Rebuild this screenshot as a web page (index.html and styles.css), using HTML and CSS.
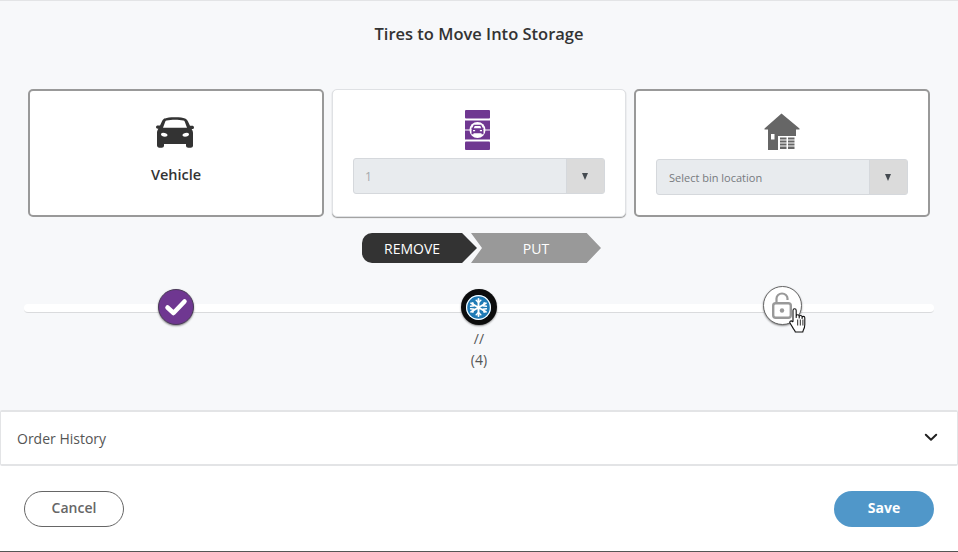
FILE: index.html
```html
<!DOCTYPE html>
<html lang="en">
<head>
<meta charset="utf-8">
<title>Tires to Move Into Storage</title>
<link rel="stylesheet" href="styles.css">
</head>
<body>
<div class="page">
  <section class="main">
    <h1 class="title">Tires to Move Into Storage</h1>
    <div class="cards">
      <div class="card card-active">
        <svg class="icon-car" width="40" height="32" viewBox="0 0 40 32"><path fill="#333" fill-rule="evenodd" d="M10 1.5C12 .7 15 .2 20 .2s8 .5 10 1.300c1.500.6 2.300 1.600 3 3l2 4.300h2.200c1 0 1.800.7 1.800 1.600 0 1-.8 1.700-1.800 1.700h-.6c.9 1.200 1.400 2.500 1.400 4v12.400c0 1.300-1 2.300-2.300 2.300h-2.400c-1.300 0-2.300-1-2.300-2.300v-1.500H9v1.500c0 1.300-1 2.300-2.300 2.300H4.300C3 30.500 2 29.500 2 28.200V15.800c0-1.500.5-2.800 1.400-4h-.6C1.800 11.800 1 11.100 1 10.100c0-.9.800-1.600 1.800-1.600H5l2-4.300c.7-1.400 1.500-2.400 3-3zM10.300 4.500 8 10.800h24l-2.300-6.300c-.3-.6-.7-.9-1.300-1C26 3 23 2.800 20 2.800s-6 .2-8.400.7c-.6.100-1 .4-1.300 1zM6 17.500c0 1 1.600 2.300 4 2.300 1.500 0 2.500-.7 2.500-1.700 0-1.200-2-2.300-4.500-2.300-1.200 0-2 .7-2 1.700zm28 0c0-1-.8-1.700-2-1.700-2.500 0-4.500 1.100-4.500 2.300 0 1 1 1.700 2.500 1.700 2.400 0 4-1.300 4-2.300z"/></svg>
        <div class="card-label">Vehicle</div>
      </div>
      <div class="card card-middle">
        <svg class="icon-tire" width="25" height="40" viewBox="0 0 25 40">
          <rect width="25" height="8.500" rx="1" fill="#6f3791"/>
          <rect y="10.500" width="25" height="9" fill="#6f3791"/>
          <rect y="20.500" width="25" height="9" fill="#6f3791"/>
          <rect y="31.500" width="25" height="8.500" rx="1" fill="#6f3791"/>
          <circle cx="12.500" cy="20" r="8" fill="#fff"/>
          <path fill="#6f3791" fill-rule="evenodd" d="M8.800 14.800h7.400l1.500 2.900h1v1.100h-.7c.4.500.5 1 .5 1.500v3.900h-2v-1H8.500v1h-2v-3.900c0-.5.100-1 .5-1.500h-.7v-1.100h1zM9.700 16.100l-.9 2.200h7.400l-.9-2.200zM8 20.100v1.100h2.100v-1.100zm6.900 0v1.100H17v-1.100z"/>
        </svg>
        <div class="select select-disabled">
          <span class="select-value">1</span>
          <span class="select-arrow"><i class="caret"></i></span>
        </div>
      </div>
      <div class="card card-active">
        <svg class="icon-house" width="36" height="37" viewBox="0 0 36 37">
          <path fill="#666" d="M17.500.500 35.500 15.500v1H32v20.500H4V16.500H.500v-1z"/>
          <rect x="7" y="21" width="3.500" height="5.500" fill="#fff"/>
          <rect x="14" y="23" width="18" height="14" fill="#fff"/>
          <path fill="#666" d="M16 24.500h6.500v2H16zm0 3h6.500v2H16zm0 3h6.500v2H16zm0 3h6.500v2.500H16zM24 24.500h6.500v2H24zm0 3h6.500v2H24zm0 3h6.500v2H24zm0 3h6.500v2.500H24z"/>
        </svg>
        <div class="select">
          <span class="select-value select-placeholder">Select bin location</span>
          <span class="select-arrow"><i class="caret"></i></span>
        </div>
      </div>
    </div>
    <div class="toggle">
      <span class="chip chip-remove">REMOVE</span>
      <span class="chip chip-put">PUT</span>
    </div>
    <div class="steps">
      <div class="step">
        <span class="dot dot-done">
          <svg width="24" height="20" viewBox="0 0 24 20"><path d="M3.500 10.500 9.500 16 20.500 4.500" fill="none" stroke="#fff" stroke-width="4.500" stroke-linecap="round" stroke-linejoin="round"/></svg>
        </span>
      </div>
      <div class="step">
        <span class="dot dot-tire">
          <span class="tire-inner">
            <svg width="19" height="19" viewBox="0 0 18 18" fill="none" stroke="#fff" stroke-width="1.800" stroke-linecap="round">
              <path d="M9 1v16M2 5l14 8M2 13 16 5"/>
              <path stroke-width="1.400" d="M6.800 2.200 9 4.200l2.200-2M6.800 15.800 9 13.800l2.200 2M1.500 7.800l2.900-.4L3.600 4.500M16.500 10.200l-2.900.4.800 2.900M1.500 10.200l2.900.4-.8 2.900M16.500 7.800l-2.900-.4.800-2.900"/>
            </svg>
          </span>
        </span>
        <div class="step-text">//</div>
        <div class="step-text">(4)</div>
      </div>
      <div class="step">
        <span class="dot dot-lock">
          <svg width="20" height="27" viewBox="0 0 20 27" fill="none">
            <path d="M4.500 12V6.500a5.500 5 0 0 1 11 0V8" stroke="#999" stroke-width="2.200"/>
            <rect x="1.200" y="11.200" width="17.600" height="14.600" rx="2.500" stroke="#999" stroke-width="2.400"/>
            <circle cx="10" cy="18.500" r="2.200" fill="#999"/>
          </svg>
        </span>
        <svg class="cursor" width="18" height="25" viewBox="0 0 18 25"><path fill="#fff" stroke="#111" stroke-width="1.100" stroke-linejoin="round" d="M4 13.500V2.600C4 1.500 4.700.8 5.600.8s1.600.7 1.600 1.800V9.500V8.400c0-1 .7-1.600 1.500-1.600s1.500.6 1.500 1.600v1.500-.9c0-1 .7-1.500 1.400-1.500s1.500.5 1.500 1.500v1.500-.7c0-.9.600-1.400 1.300-1.400s1.400.5 1.400 1.400v6.700c0 2.500-.5 4-1.500 5.700-.3.700-.5 1.300-.5 1.800H6.300c0-.9-.8-1.800-1.800-3.100L1.300 15.500c-.7-1-.6-1.800 0-2.300.7-.5 1.500-.3 2.100.5z"/><path stroke="#111" stroke-width=".9" d="M8.700 11.500v6M11.300 11.500v6M13.900 11.500v6"/></svg>
      </div>
    </div>
  </section>
  <section class="history">
    <span class="history-label">Order History</span>
    <svg class="history-chevron" width="14" height="9" viewBox="0 0 14 9"><path d="M1.800 1.800 7 6.800l5.200-5" fill="none" stroke="#222" stroke-width="2" stroke-linecap="round" stroke-linejoin="round"/></svg>
  </section>
  <footer class="footer">
    <button class="btn btn-cancel" type="button">Cancel</button>
    <button class="btn btn-save" type="button">Save</button>
  </footer>
</div>
</body>
</html>
```

FILE: styles.css
```css
* { box-sizing: border-box; }
html, body { margin: 0; padding: 0; }
body {
  width: 958px;
  height: 552px;
  overflow: hidden;
  background: #fff;
  font-family: "Open Sans", "Liberation Sans", sans-serif;
  color: #333;
}
.page {
  height: 552px;
  display: flex;
  flex-direction: column;
  border-bottom: 1px solid #555;
}
.main {
  height: 411px;
  background: #f7f8fa;
  border-top: 1px solid #e3e4e6;
  display: flex;
  flex-direction: column;
}
.title {
  margin: 22px 0 0;
  height: 22px;
  font-size: 16.500px;
  line-height: 22px;
  font-weight: 600;
  text-align: center;
  color: #333;
}
.cards {
  margin: 44px 28px 0;
  display: grid;
  grid-template-columns: 296px 294px 296px;
  gap: 8px;
}
.card {
  height: 128px;
  background: #fff;
  border-radius: 5px;
  display: flex;
  flex-direction: column;
  align-items: center;
}
.card-active {
  border: 2px solid #999;
}
.card-middle {
  border: 1px solid #dfe1e4;
  box-shadow: 0 1px 1px #999;
}
.icon-car { margin-top: 26px; margin-right: 2px; }
.card-label {
  margin-top: 16px;
  font-size: 14.500px;
  line-height: 20px;
  font-weight: 600;
  color: #333;
}
.icon-tire { margin-top: 20px; margin-right: 3px; }
.icon-house { margin-top: 22px; }
.select {
  margin-top: 9px;
  width: 252px;
  height: 36px;
  background: #e8ebee;
  border: 1px solid #d5d8dc;
  border-radius: 3px;
  display: flex;
  align-items: center;
  justify-content: space-between;
  flex: none;
}
.card-middle .select { margin-top: 8px; }
.select-value {
  padding: 1px 0 0 11px;
  font-size: 12px;
  color: #a5a8ac;
}
.select-placeholder { padding: 0 0 0 12px; color: #777a7e; font-size: 11px; }
.select-arrow {
  width: 38px;
  height: 100%;
  padding-right: 2px;
  background: #dbdbdb;
  border-left: 1px solid #d5d8dc;
  display: flex;
  align-items: center;
  justify-content: center;
}
.caret {
  width: 0;
  height: 0;
  border-left: 3.500px solid transparent;
  border-right: 3.500px solid transparent;
  border-top: 7px solid #444a50;
}
.toggle {
  margin-top: 16px;
  margin-left: 362px;
  display: flex;
  height: 30px;
}
.chip {
  height: 30px;
  display: flex;
  align-items: center;
  justify-content: center;
  font-size: 14px;
  color: #fff;
}
.chip-remove {
  width: 115px;
  padding-right: 15px;
  background: #333;
  border-radius: 10px 0 0 10px;
  clip-path: polygon(0 0, 87% 0, 100% 50%, 87% 100%, 0 100%);
  position: relative;
  z-index: 1;
}
.chip-put {
  width: 130px;
  margin-left: -6px;
  background: #999;
  clip-path: polygon(0 0, 89% 0, 100% 50%, 89% 100%, 0 100%, 11px 50%);
}
.steps {
  position: relative;
  margin: 26px 24px 0;
  display: grid;
  grid-template-columns: repeat(3, 1fr);
}
.steps::before {
  content: "";
  position: absolute;
  left: 0;
  right: 0;
  top: 15px;
  height: 8px;
  background: #fff;
  border-bottom: 1px solid #dadbdd;
  border-radius: 4px;
}
.step {
  position: relative;
  display: flex;
  flex-direction: column;
  align-items: center;
}
.dot {
  position: relative;
  width: 36px;
  height: 36px;
  border-radius: 50%;
  display: flex;
  align-items: center;
  justify-content: center;
  box-shadow: 0 1px 2px rgba(0,0,0,.45);
}
.dot-done { background: #6f3791; border: 1px solid #4a3a58; }
.dot-tire { background: #0c0c0c; }
.tire-inner {
  width: 25px;
  height: 25px;
  border-radius: 50%;
  background: #1f7ab5;
  box-shadow: 0 0 0 1.200px #fff inset;
  display: flex;
  align-items: center;
  justify-content: center;
}
.dot-lock {
  background: #fff;
  border: 1px solid #666;
  width: 39px;
  height: 39px;
  margin-top: -3px;
}
.step-text {
  font-size: 14px;
  line-height: 21px;
  color: #555;
  text-align: center;
}
.step-text:first-of-type { margin-top: 3px; }
.cursor {
  position: absolute;
  left: 50%;
  top: 19px;
  margin-left: 7px;
}
.history {
  height: 56px;
  margin-top: -1px;
  background: #fff;
  border: 1px solid #e3e4e6;
  border-top-width: 2px;
  border-bottom-width: 2px;
  border-radius: 2px;
  padding: 0 19px 0 16px;
  display: flex;
  align-items: center;
  justify-content: space-between;
}
.history-label {
  font-size: 14px;
  color: #555;
}
.history-chevron { margin-bottom: 2px; }
.footer {
  flex: 1;
  padding: 1px 24px 0;
  display: flex;
  align-items: center;
  justify-content: space-between;
}
.btn {
  width: 100px;
  height: 36px;
  border-radius: 18px;
  font-family: inherit;
  font-size: 14px;
  padding: 0 0 4px;
}
.btn-cancel {
  background: #fff;
  border: 1px solid #666;
  color: #666;
  font-weight: 600;
}
.btn-save {
  background: #5097c9;
  border: 0;
  color: #fff;
  font-weight: 700;
}
```
